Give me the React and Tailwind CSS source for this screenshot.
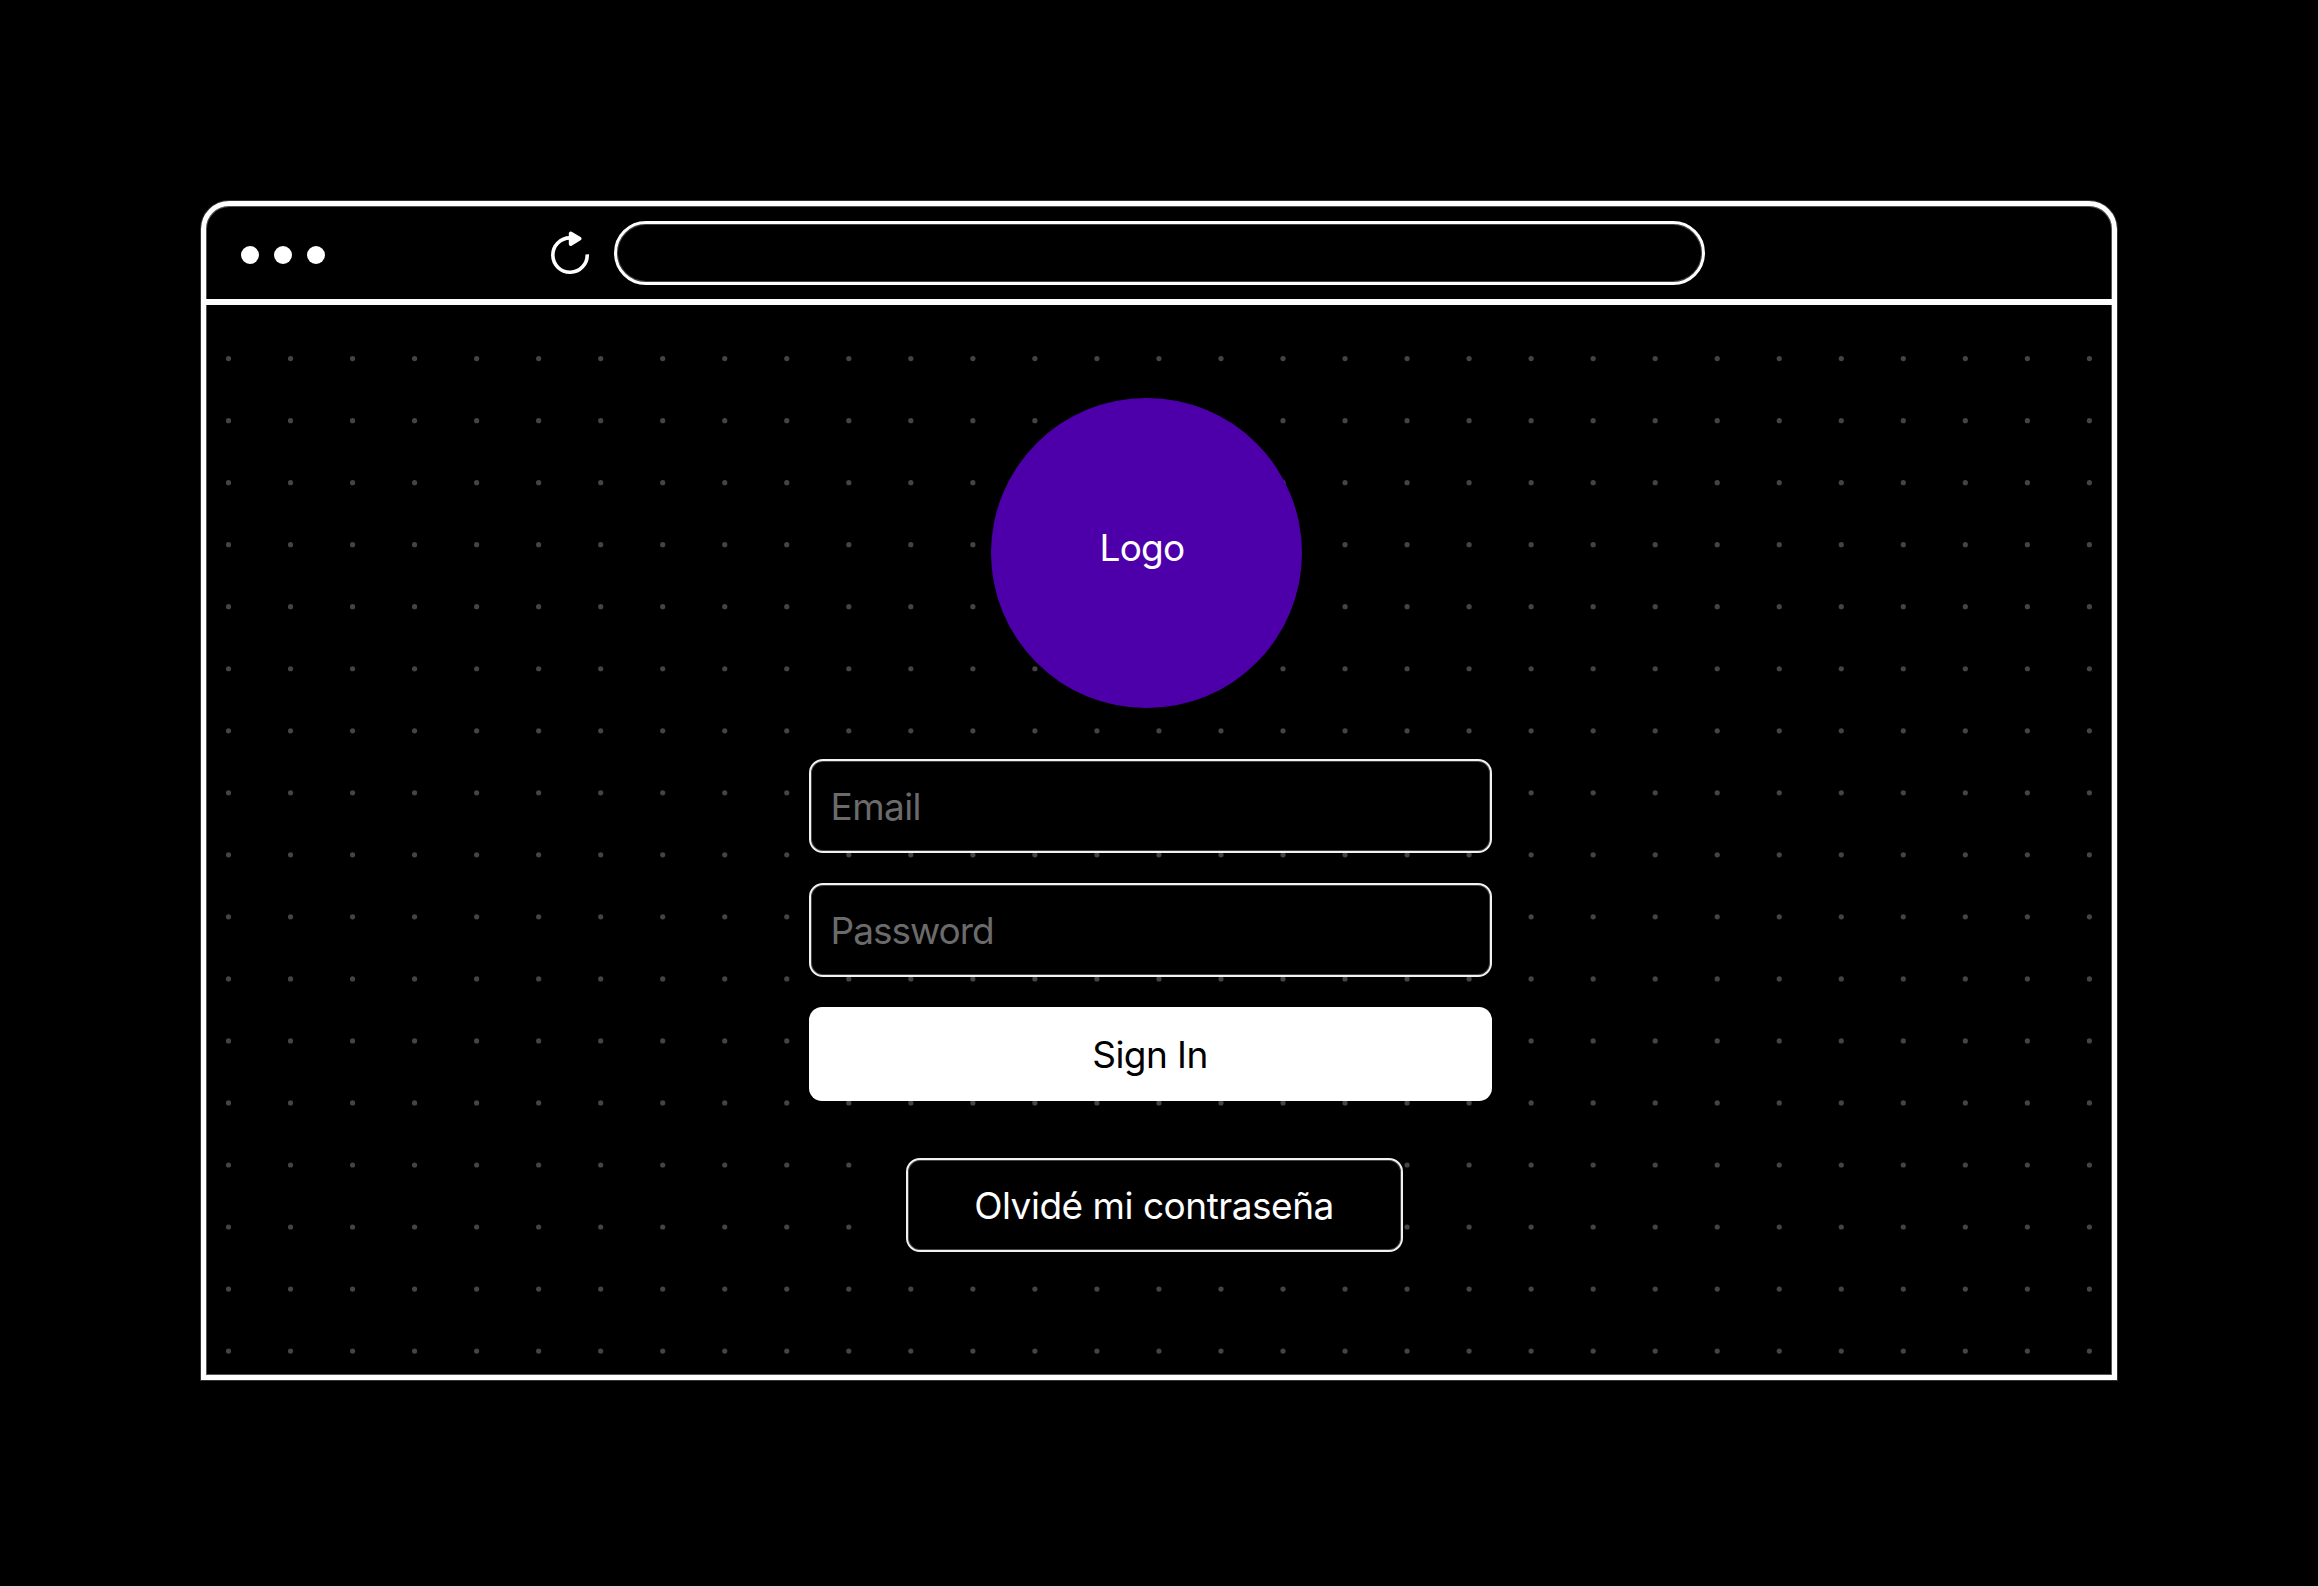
const COLUMNS = Array.from({ length: 31 }, (_, i) => i);
const ROWS = Array.from({ length: 17 }, (_, i) => i);
const STEP = 62.03;

function DotGrid() {
  return (
    <svg className="absolute inset-0 h-full w-full" aria-hidden="true">
      {ROWS.map((row) =>
        COLUMNS.map((col) => (
          <circle key={`${row}-${col}`} cx={22.5 + col * STEP} cy={53.6 + row * STEP} r="2.6" fill="#444444" />
        ))
      )}
    </svg>
  );
}

function ReloadIcon() {
  return (
    <svg className="ml-[221px] h-[48px] w-[48px] shrink-0" viewBox="0 0 48 48" fill="none">
      <path d="M41.2 23.4A17.2 17.2 0 1 1 24 6.9" stroke="#ffffff" strokeWidth="3.6" />
      <path d="M24.7 2.4V13L33.6 7.7Z" fill="#ffffff" stroke="#ffffff" strokeWidth="3.8" strokeLinejoin="round" />
    </svg>
  );
}

function BrowserBar() {
  return (
    <header className="flex h-[99px] items-start border-b-[6px] border-[#fcfcfc]">
      <div className="ml-[34.5px] mt-[40px] flex shrink-0 gap-[15px]">
        <span className="h-[18px] w-[18px] rounded-full bg-white" />
        <span className="h-[18px] w-[18px] rounded-full bg-white" />
        <span className="h-[18px] w-[18px] rounded-full bg-white" />
      </div>
      <div className="mt-[25px] flex shrink-0">
        <ReloadIcon />
      </div>
      <div className="ml-5 mt-[15px] h-[64px] w-[1091px] shrink-0 rounded-full border-[3px] border-white shadow-[inset_0_0_0_1px_#444444]" />
    </header>
  );
}

function Field({ children }) {
  return (
    <div className="flex h-[94px] items-center rounded-[14px] border-2 border-[#f2f2f2] bg-black pl-[19.5px] pt-[2px] text-[#6b6b6b] shadow-[inset_0_0_0_1px_#444444]">
      {children}
    </div>
  );
}

export default function App() {
  return (
    <main className="h-[1587px] w-[2319px] overflow-hidden border-b border-r border-[#d8d8d8] bg-black pl-[201px] pt-[201px] font-['Inter',sans-serif] text-[37px] leading-[44px] text-white">
      <section className="flex h-[1179px] w-[1916px] flex-col rounded-t-[28px] border-[5px] border-white shadow-[0_0_0_1px_#333333,inset_0_0_0_1px_#555555]">
        <BrowserBar />
        <div className="relative flex-1">
          <DotGrid />
          <div className="relative ml-[603px] flex w-[683px] flex-col">
            <div className="ml-[182px] mt-[93px] flex h-[310px] w-[311px] items-center justify-center rounded-full bg-[#4d00a9]">
              <span className="relative -left-[4.5px] -top-[5px] tracking-[-0.8px]">Logo</span>
            </div>
            <div className="mt-[51px] flex flex-col gap-[30px]">
              <Field>
                <span className="tracking-[-0.6px]">Email</span>
              </Field>
              <Field>
                <span className="tracking-[-1px]">Password</span>
              </Field>
              <button className="h-[94px] rounded-[13px] bg-white pr-px pt-[2px] tracking-[-0.55px] text-black">Sign In</button>
            </div>
            <button className="ml-[97px] mt-[57px] h-[94px] w-[497px] rounded-[14px] border-2 border-[#f2f2f2] bg-black pr-px pt-[2px] tracking-[-0.48px] shadow-[inset_0_0_0_1px_#444444]">
              Olvidé mi contraseña
            </button>
          </div>
        </div>
      </section>
    </main>
  );
}
